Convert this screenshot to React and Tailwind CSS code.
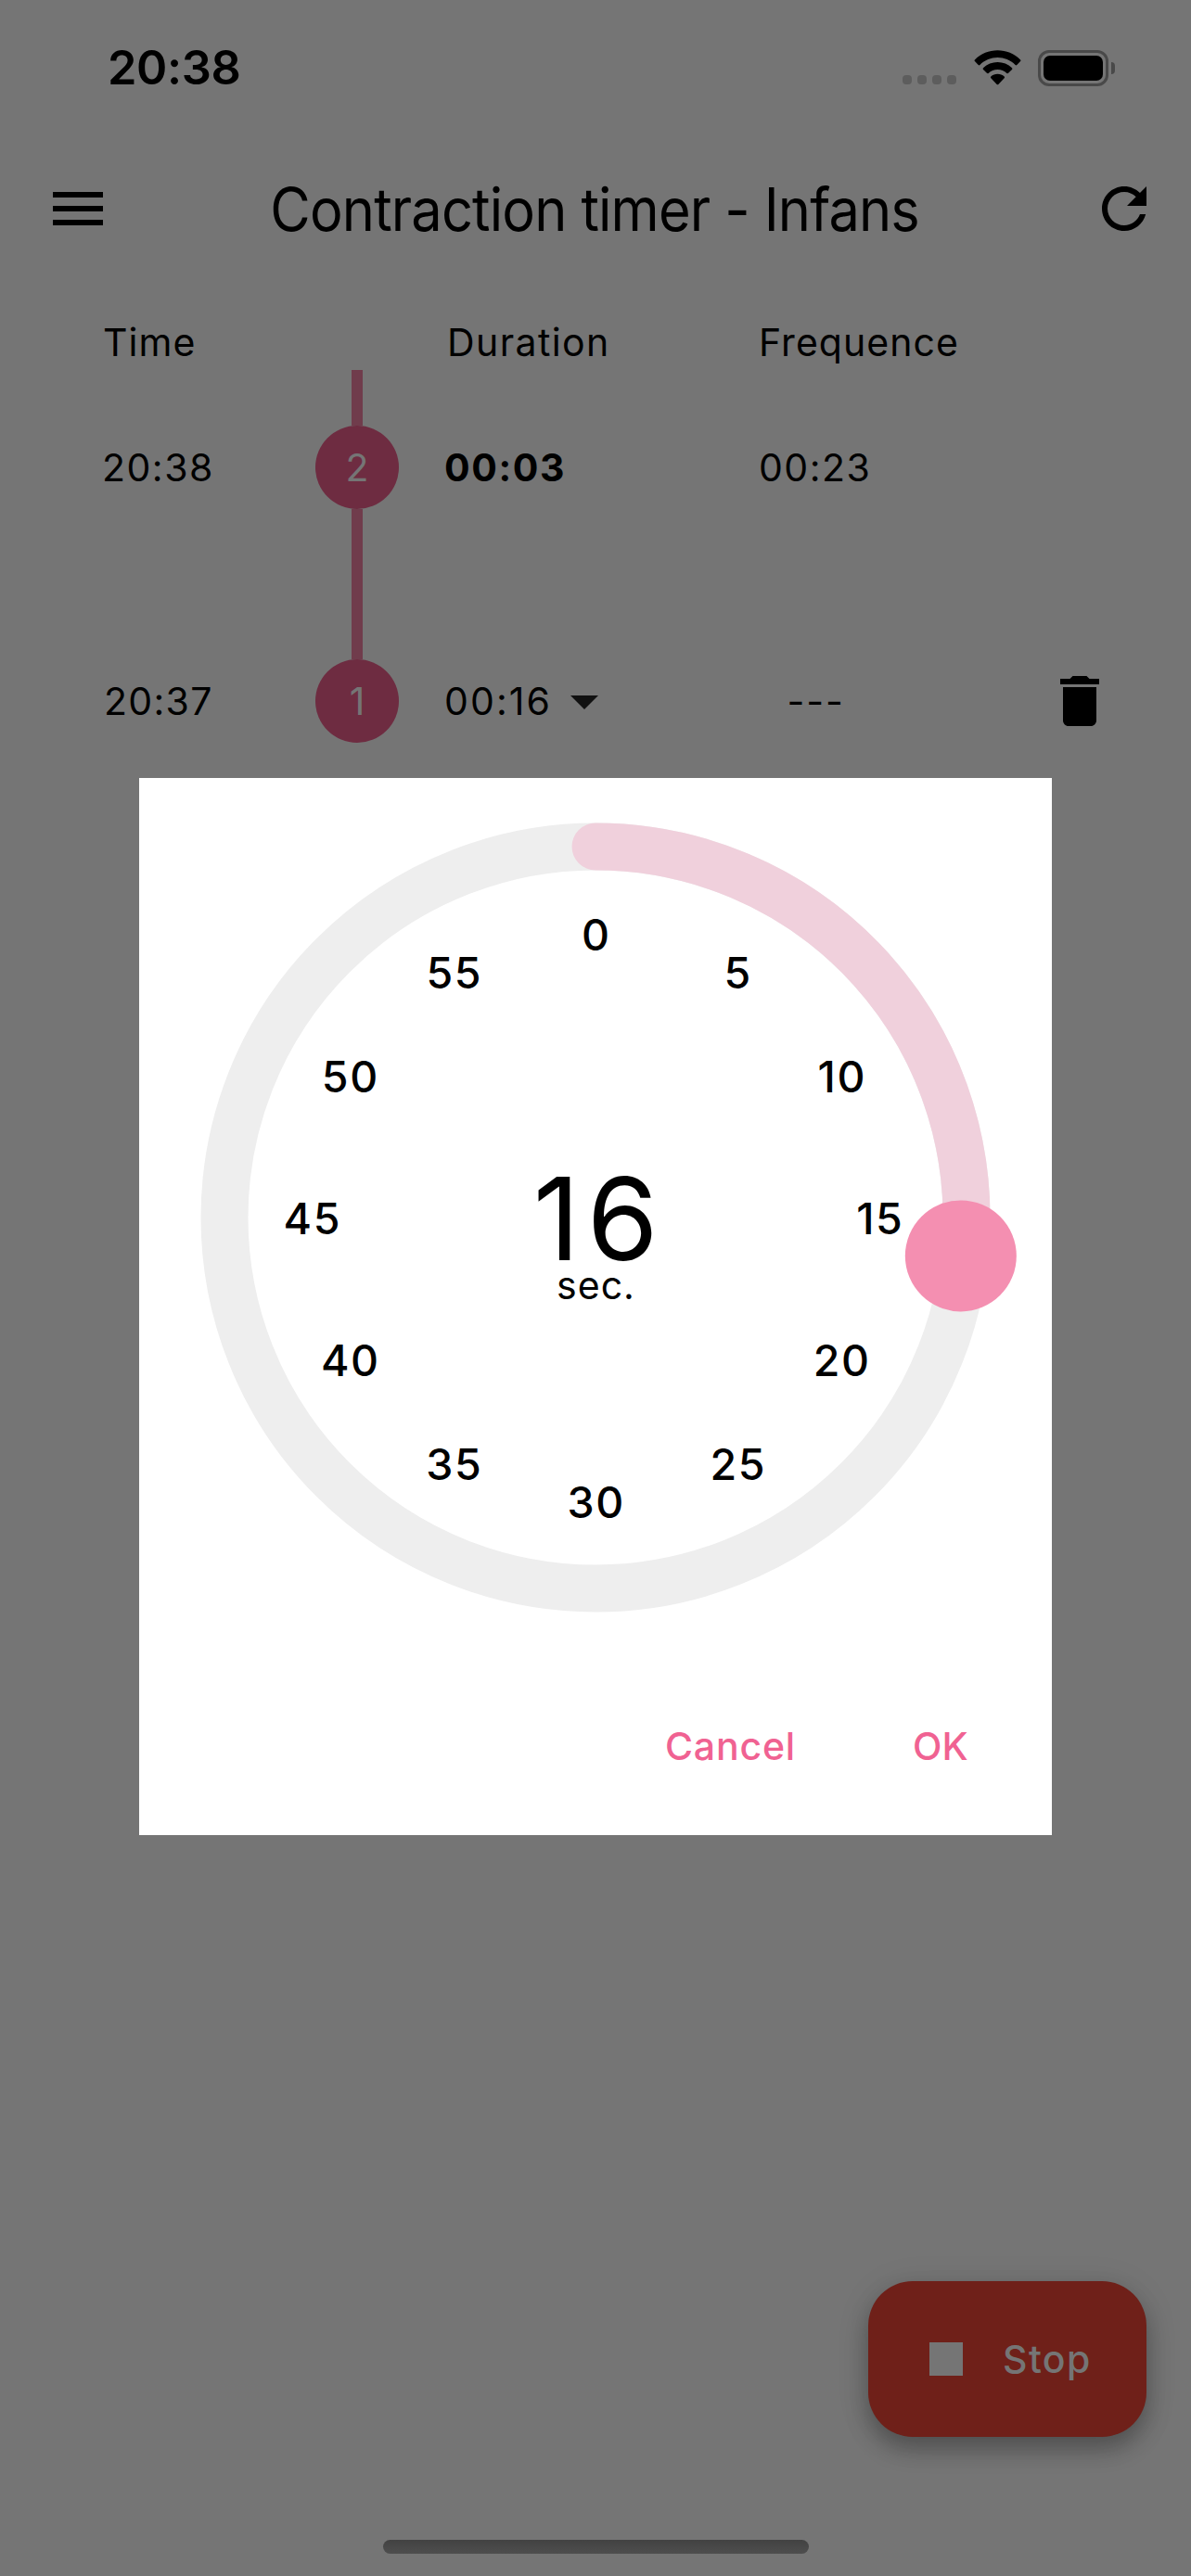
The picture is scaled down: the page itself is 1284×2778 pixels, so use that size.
const LABELS = [0, 5, 10, 15, 20, 25, 30, 35, 40, 45, 50, 55];
const SECONDS = 16;
const RING = 400;
const LABEL_RADIUS = 306;

const point = (seconds, radius) => {
  const angle = (seconds / 60) * 2 * Math.PI;
  return [426 + radius * Math.sin(angle), 426 - radius * Math.cos(angle)];
};

function Icon({ d, className }) {
  return (
    <svg viewBox="0 0 24 24" className={`size-[72px] shrink-0 fill-current ${className || ""}`}>
      <path d={d} />
    </svg>
  );
}

function StatusBar() {
  return (
    <div className="flex h-[141px] items-start justify-between pt-[42px] pl-[116px] pr-[82px]">
      <div className="flex h-[63px] items-center text-[50.5px] leading-none font-semibold tracking-[-0.4px]">20:38</div>
      <div className="flex h-[62px] items-center">
        <div className="mt-[26px] flex gap-[6px]">
          {[0, 1, 2, 3].map((i) => (
            <div key={i} className="h-[10px] w-[10px] rounded-[4px] bg-[#5d5d5d]" />
          ))}
        </div>
        <svg viewBox="0 0 51 38" className="ml-[19px] h-[38px] w-[51px] fill-black">
          <path d="M25.5 0.3c9.2 0 17.9 3.6 24.6 10.1.5.5.5 1.200 0 1.700l-3.800 3.900c-.5.500-1.200.500-1.700 0C39.400 10.900 32.600 8.100 25.500 8.100S11.600 10.900 6.400 16c-.5.500-1.200.500-1.700 0L.9 12.100c-.5-.5-.5-1.200 0-1.700C7.600 3.900 16.300.3 25.500.3z" />
          <path d="M25.500 13c5.800 0 11.300 2.200 15.500 6.200.500.500.500 1.200 0 1.700l-3.900 3.900c-.5.500-1.200.500-1.700.1-2.700-2.500-6.200-3.900-9.900-3.900s-7.200 1.400-9.900 3.900c-.5.400-1.200.400-1.700-.1L10 20.900c-.5-.5-.5-1.200 0-1.700 4.200-4 9.700-6.200 15.500-6.200z" />
          <path d="M25.500 25.800c2.700 0 5.300 1 7.200 2.800.500.500.5 1.200 0 1.700l-6.400 6.600c-.4.500-1.100.500-1.600 0l-6.400-6.600c-.5-.5-.5-1.200 0-1.700 1.900-1.800 4.500-2.800 7.200-2.800z" />
        </svg>
        <div className="ml-[18px] flex items-center gap-[3px]">
          <div className="h-[39px] w-[76px] rounded-[12px] border-[3px] border-[#494949] p-[3px]">
            <div className="h-full w-full rounded-[7px] bg-black" />
          </div>
          <div className="h-[13px] w-[4px] rounded-r-full bg-[#494949]" />
        </div>
      </div>
    </div>
  );
}

function TopBar() {
  return (
    <div className="flex h-[168px] items-center justify-between pl-12 pr-9">
      <Icon d="M3 18h18v-2H3v2zm0-5h18v-2H3v2zm0-7v2h18V6H3z" />
      <h1 className="mt-[2px] mr-[13px] scale-x-[0.93] text-[64px] leading-none tracking-[-0.9px] whitespace-nowrap">
        Contraction timer - Infans
      </h1>
      <Icon d="M17.65 6.35C16.2 4.9 14.21 4 12 4c-4.42 0-7.99 3.58-7.99 8s3.57 8 7.99 8c3.73 0 6.84-2.55 7.73-6h-2.08c-.82 2.33-3.04 4-5.65 4-3.31 0-6-2.690-6-6s2.690-6 6-6c1.660 0 3.140.690 4.220 1.780L13 11h7V4l-2.350 2.350z" />
    </div>
  );
}

function TimelineNode({ label, last }) {
  return (
    <div className="flex h-full flex-col items-center">
      <div className="w-3 flex-1 bg-[#703c4c]" />
      <div className="flex size-[90px] items-center justify-center rounded-full bg-[#6e2c41] text-[#757575]">{label}</div>
      <div className={last ? "w-3 flex-1" : "w-3 flex-1 bg-[#703c4c]"} />
    </div>
  );
}

const COLS = "grid grid-cols-[340px_90px_380px_312px_162px] items-center";

function Timeline() {
  return (
    <div className="mt-[30px] text-[41px] leading-none">
      <div className={`${COLS} h-[60px]`}>
        <div className="pl-[111px] tracking-[1.06px]">Time</div>
        <div />
        <div className="pl-[52px] tracking-[1.4px]">Duration</div>
        <div className="pl-[8px] tracking-[1.06px]">Frequence</div>
      </div>
      <div className={`${COLS} h-[210px]`}>
        <div className="pl-[110px] tracking-[1.5px]">20:38</div>
        <TimelineNode label="2" />
        <div className="pl-[49px] font-bold tracking-[1.6px]">00:03</div>
        <div className="pl-[8px] tracking-[1.5px]">00:23</div>
      </div>
      <div className={`${COLS} h-[42px]`}>
        <div />
        <div className="h-full w-3 justify-self-center bg-[#703c4c]" />
      </div>
      <div className={`${COLS} h-[210px]`}>
        <div className="pl-[112px] tracking-[1.3px]">20:37</div>
        <TimelineNode label="1" last />
        <div className="flex items-center pl-[49px] tracking-[2.1px]">
          <span className="w-[115px]">00:16</span>
          <Icon className="text-[#111]" d="M7 10l5 5 5-5z" />
        </div>
        <div className="pl-[38.500px] tracking-[1.9px]">---</div>
        <Icon className="ml-[6px]" d="M6 19c0 1.100.9 2 2 2h8c1.100 0 2-.9 2-2V7H6v12zM19 4h-3.500l-1-1h-5l-1 1H5v2h14V4z" />
      </div>
    </div>
  );
}

function Dial() {
  const [endX, endY] = point(SECONDS, RING);
  const [knobX, knobY] = point(SECONDS, 396);
  return (
    <div className="relative size-[852px]">
      <svg viewBox="0 0 852 852" className="size-full overflow-visible" fill="none">
        <circle cx="426" cy="426" r={RING} stroke="#eeeeee" strokeWidth="51" />
        <path
          d={`M426 ${426 - RING} A${RING} ${RING} 0 0 1 ${endX} ${endY}`}
          stroke="#f0d0dc"
          strokeWidth="51"
          strokeLinecap="round"
        />
        <circle cx={knobX} cy={knobY} r="60" fill="#f48fb1" />
      </svg>
      {LABELS.map((n) => {
        const [x, y] = point(n, LABEL_RADIUS);
        return (
          <span
            key={n}
            className="absolute -translate-x-1/2 -translate-y-1/2 pl-[1.6px] text-[46.5px] leading-none font-medium tracking-[1.6px]"
            style={{ left: x, top: y + 1.5 }}
          >
            {n}
          </span>
        );
      })}
      <div className="absolute inset-0 flex flex-col items-center pt-[375px]">
        <div className="pl-[8px] text-[124px] leading-[104px] tracking-[7.5px]">16</div>
        <div className="pl-px text-[41px] leading-[41px] tracking-[1px]">sec.</div>
      </div>
    </div>
  );
}

function Dialog() {
  return (
    <div className="absolute top-[838.5px] left-[150px] flex h-[1140px] w-[984px] flex-col items-center bg-white pt-[48px]">
      <Dial />
      <div className="mt-[109px] flex h-[72px] items-center self-stretch text-[41px] leading-none font-medium text-[#f06292]">
        <span className="ml-[567px] w-[267px] tracking-[0.8px]">Cancel</span>
        <span>OK</span>
      </div>
    </div>
  );
}

export default function App() {
  return (
    <div className="relative flex h-[2778px] w-[1284px] flex-col overflow-hidden bg-[#757575] font-[Inter,sans-serif] text-black">
      <StatusBar />
      <TopBar />
      <Timeline />
      <div className="mt-auto flex flex-col">
        <button className="mr-12 flex h-[168px] w-[300px] items-center self-end rounded-[48px] bg-[#6f2019] pl-[66px] text-[#757575] shadow-[0_14px_24px_0_rgba(0,0,0,0.26),0_4px_36px_0_rgba(0,0,0,0.1)]">
          <span className="size-9 bg-[#757575]" />
          <span className="ml-[43px] text-[41px] leading-none font-medium tracking-[1.4px]">Stop</span>
        </button>
        <div className="mt-[111px] mb-[24px] h-[15px] w-[459px] self-center rounded-full bg-linear-to-b from-[#424242] to-[#4e4e4e]" />
      </div>
      <Dialog />
    </div>
  );
}
